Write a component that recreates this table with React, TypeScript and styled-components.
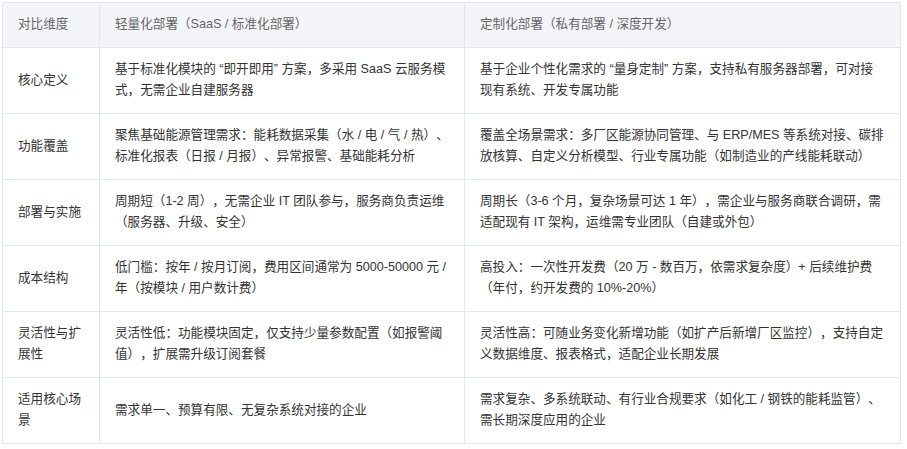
import React from "react";
import styled, { createGlobalStyle } from "styled-components";

const Global = createGlobalStyle`
  html, body {
    margin: 0;
    padding: 0;
    background: #ffffff;
  }
  body {
    font-family: "Liberation Sans", "Noto Sans CJK SC", sans-serif;
  }
`;

const Page = styled.div`
  padding: 2px 7px 0 2px;
`;

const Table = styled.table`
  width: 898px;
  border-collapse: collapse;
  table-layout: fixed;
  font-size: 12.6px;
  line-height: 21px;
  color: #333333;
  text-spacing-trim: space-all;
`;

const HeadCell = styled.th`
  background: #f3f5f9;
  color: #666666;
  font-weight: normal;
  text-align: left;
  padding: 11px 15px 12px;
  border: 1px solid #e3e6ee;
  vertical-align: middle;
`;

const Cell = styled.td`
  padding: 11px 15px 12px;
  border: 1px solid #e3e6ee;
  vertical-align: middle;
  text-align: left;
  color: #333333;
  word-break: break-all;
`;

const rows: [string, string, string][] = [
  [
    "核心定义",
    "基于标准化模块的 “即开即用” 方案，多采用 SaaS 云服务模式，无需企业自建服务器",
    "基于企业个性化需求的 “量身定制” 方案，支持私有服务器部署，可对接现有系统、开发专属功能",
  ],
  [
    "功能覆盖",
    "聚焦基础能源管理需求：能耗数据采集（水 / 电 / 气 / 热）、标准化报表（日报 / 月报）、异常报警、基础能耗分析",
    "覆盖全场景需求：多厂区能源协同管理、与 ERP/MES 等系统对接、碳排放核算、自定义分析模型、行业专属功能（如制造业的产线能耗联动）",
  ],
  [
    "部署与实施",
    "周期短（1-2 周），无需企业 IT 团队参与，服务商负责运维（服务器、升级、安全）",
    "周期长（3-6 个月，复杂场景可达 1 年），需企业与服务商联合调研，需适配现有 IT 架构，运维需专业团队（自建或外包）",
  ],
  [
    "成本结构",
    "低门槛：按年 / 按月订阅，费用区间通常为 5000-50000 元 / 年（按模块 / 用户数计费）",
    "高投入：一次性开发费（20 万 - 数百万，依需求复杂度）+ 后续维护费（年付，约开发费的 10%-20%）",
  ],
  [
    "灵活性与扩展性",
    "灵活性低：功能模块固定，仅支持少量参数配置（如报警阈值），扩展需升级订阅套餐",
    "灵活性高：可随业务变化新增功能（如扩产后新增厂区监控），支持自定义数据维度、报表格式，适配企业长期发展",
  ],
  [
    "适用核心场景",
    "需求单一、预算有限、无复杂系统对接的企业",
    "需求复杂、多系统联动、有行业合规要求（如化工 / 钢铁的能耗监管）、需长期深度应用的企业",
  ],
];

export default function App() {
  return (
    <Page>
      <Global />
      <Table>
        <colgroup>
          <col style={{ width: 97 }} />
          <col style={{ width: 365 }} />
          <col style={{ width: 436 }} />
        </colgroup>
        <thead>
          <tr>
            <HeadCell>对比维度</HeadCell>
            <HeadCell>轻量化部署（SaaS / 标准化部署）</HeadCell>
            <HeadCell>定制化部署（私有部署 / 深度开发）</HeadCell>
          </tr>
        </thead>
        <tbody>
          {rows.map((r) => (
            <tr key={r[0]}>
              <Cell>{r[0]}</Cell>
              <Cell>{r[1]}</Cell>
              <Cell>{r[2]}</Cell>
            </tr>
          ))}
        </tbody>
      </Table>
    </Page>
  );
}
